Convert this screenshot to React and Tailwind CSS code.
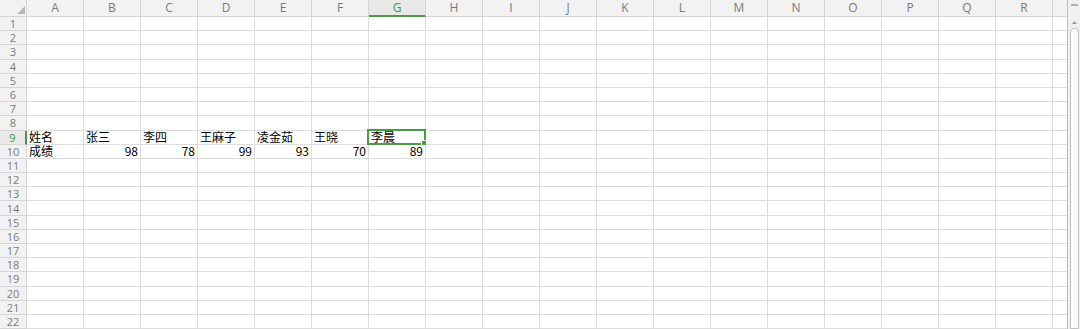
import React from "react";

const cols = ["A","B","C","D","E","F","G","H","I","J","K","L","M","N","O","P","Q","R"];
const rows = Array.from({ length: 22 }, (_, i) => i + 1);

const data = {
  9: { A: "姓名", B: "张三", C: "李四", D: "王麻子", E: "凌金茹", F: "王晓", G: "李晨" },
  10: { A: "成绩", B: "98", C: "78", D: "99", E: "93", F: "70", G: "89" },
};

const font = { fontFamily: '"Noto Sans CJK SC", "Noto Sans", sans-serif' };
const numFont = { fontFamily: '"Open Sans", "Noto Sans", sans-serif' };

export default function App() {
  return (
    <div className="w-[1080px] h-[329px] overflow-hidden bg-white flex" style={font}>
      <div className="flex-1 flex flex-col overflow-hidden">
        {/* header */}
        <div className="flex h-[17px] shrink-0 bg-[#f2f2f2]">
          <div className="w-[27px] shrink-0 border-r border-b border-[#d6d6d6] relative">
            <svg className="absolute left-[17px] top-[6px]" width="8" height="8" viewBox="0 0 8 8">
              <polygon points="8,0 8,8 0,8" fill="#b5b5b5" />
            </svg>
          </div>
          {cols.map((c) => (
            <div
              key={c}
              style={numFont}
              className={
                c === "G"
                  ? "w-[57px] shrink-0 border-r border-[#d6d6d6] border-b-2 border-b-[#4a9b43] flex items-center justify-center text-[12px] leading-[12px] text-[#3f9a3c] bg-[#e9e9e9]"
                  : "w-[57px] shrink-0 border-r border-b border-[#d6d6d6] flex items-center justify-center text-[12px] leading-[12px] text-[#7a7a7a]"
              }
            >
              {c}
            </div>
          ))}
          <div className="w-[57px] shrink-0 border-b border-[#d6d6d6]" />
        </div>
        {rows.map((r) => (
          <div key={r} className="flex h-[14.2px] shrink-0">
            <div
              style={numFont}
              className={
                r === 9
                  ? "w-[27px] shrink-0 bg-[#e9e9e9] border-r-2 border-r-[#4a9b43] border-b border-[#d6d6d6] flex items-center justify-center overflow-hidden text-[11px] leading-[11px] text-[#3f9a3c]"
                  : "w-[27px] shrink-0 bg-[#f2f2f2] border-r border-b border-[#d6d6d6] flex items-center justify-center overflow-hidden text-[11px] leading-[11px] text-[#7a7a7a]"
              }
            >
              {r}
            </div>
            {cols.map((c) => {
              const v = data[r] && data[r][c];
              const isNum = v && /^\d+$/.test(v);
              const sel = r === 9 && c === "G";
              return (
                <div
                  key={c}
                  className={
                    "w-[57px] shrink-0 border-r border-b border-[#dcdcdc] relative flex items-end text-[12px] leading-[12px] text-black px-[2px] pb-[1px] " +
                    (isNum ? "justify-end" : "justify-start")
                  }
                >
                  {v}
                  {sel && (
                    <div className="absolute left-[-2px] top-[-2px] right-[-1px] bottom-[-1px] border-2 border-[#4a9b43]">
                      <div className="absolute right-[-3px] bottom-[-3px] w-[4px] h-[4px] bg-[#4a9b43] border border-white box-content" />
                    </div>
                  )}
                </div>
              );
            })}
            <div className="w-[57px] shrink-0 border-b border-[#dcdcdc]" />
          </div>
        ))}
      </div>
      {/* scrollbar */}
      <div className="w-[13px] shrink-0 bg-[#f0f0f0] border-l border-[#bdbdbd] flex flex-col items-center">
        <div className="h-[17px] w-full flex items-start justify-center pt-[4px]">
          <div className="w-[7px] h-[2px] bg-[#b0b0b0]" />
        </div>
        <div className="h-[10px] flex items-center justify-center">
          <svg width="5" height="3" viewBox="0 0 5 3">
            <polygon points="2.5,0 5,3 0,3" fill="#9a9a9a" />
          </svg>
        </div>
        <div className="flex-1 w-[9px] bg-[#fbfbfb] border border-[#c2c2c2] rounded-t-[4px] mt-[1px]" />
      </div>
    </div>
  );
}
